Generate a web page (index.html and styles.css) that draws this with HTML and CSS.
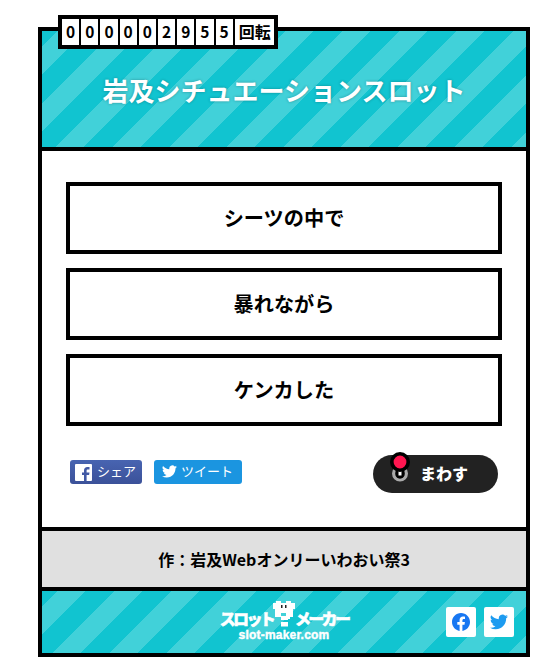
FILE: index.html
```
<!DOCTYPE html>
<html lang="ja">
<head>
<meta charset="utf-8">
<title>岩及シチュエーションスロット</title>
<link rel="stylesheet" href="styles.css">
</head>
<body>
<main class="card">
  <div class="counter"><span>0</span><span>0</span><span>0</span><span>0</span><span>0</span><span>2</span><span>9</span><span>5</span><span>5</span><span class="unit">回転</span></div>
  <header class="head stripes"><h1>岩及シチュエーションスロット</h1></header>
  <section class="body">
    <div class="slot">シーツの中で</div>
    <div class="slot">暴れながら</div>
    <div class="slot">ケンカした</div>
    <div class="actions">
      <a class="share fb"><svg width="17" height="17" viewBox="0 0 17 17"><rect width="17" height="17" rx="1" fill="#fff"/><path d="M9 17v-6H7V8.400h2V6.500C9 4.300 10.300 3 12.400 3H14.500v2.500h-1.700c-.9 0-1.200.4-1.200 1.200v1.700h2.900l-.4 2.600h-2.500v6z" fill="#4259a5"/></svg><span>シェア</span></a>
      <a class="share tw"><svg width="15" height="15" viewBox="0 0 24 24"><path fill="#fff" d="M23.950 4.570a10 10 0 01-2.820.77 4.960 4.960 0 002.160-2.720c-.95.56-2 .96-3.130 1.180a4.920 4.920 0 00-8.380 4.480C7.690 8.090 4.070 6.130 1.640 3.160a4.920 4.920 0 001.520 6.570 4.900 4.900 0 01-2.230-.61v.06a4.920 4.920 0 003.950 4.830 5 5 0 01-2.210.08 4.940 4.940 0 004.600 3.420A9.870 9.870 0 010 19.540a14 14 0 007.550 2.210c9.050 0 14-7.500 14-13.980 0-.21 0-.42-.02-.63a9.940 9.940 0 002.460-2.550z"/></svg><span>ツイート</span></a>
      <button class="spin"><svg width="22" height="32" viewBox="0 0 22 32"><circle cx="11" cy="22.500" r="6.500" fill="#222" stroke="#aaa" stroke-width="3"/><path d="M11 12v11.500" stroke="#000" stroke-width="8" stroke-linecap="round"/><path d="M11 20v4.500" stroke="#fff" stroke-width="3"/><circle cx="11" cy="11" r="8.200" fill="#ff1650" stroke="#000" stroke-width="3.600"/></svg><span>まわす</span></button>
    </div>
  </section>
  <section class="author">作：岩及Webオンリーいわおい祭3</section>
  <footer class="foot stripes">
    <div class="logo">
      <div class="name"><span>スロット</span><svg width="22" height="26" viewBox="0 0 22 26"><path fill="#fff" d="M3 0h5v2h5V0h5v2h4v6h-2v8h-3v2h-2v1H8v-4h5v-3H8v4H2V8H0V2h3zM8 21h7v4.500H8z"/><path fill="#222" d="M8 4h1.500v3H8zM12 4h1.500v3H12z"/></svg><span>メーカー</span></div>
      <div class="url">slot-maker.com</div>
    </div>
    <div class="social">
      <a><svg width="18" height="18" viewBox="0 0 24 24"><path fill="#1877f2" d="M24 12.070C24 5.450 18.630.07 12 .07S0 5.450 0 12.070c0 5.990 4.390 10.960 10.130 11.860v-8.390H7.080v-3.470h3.050V9.430c0-3.010 1.790-4.670 4.530-4.670 1.310 0 2.680.24 2.680.24v2.950h-1.510c-1.490 0-1.960.93-1.960 1.870v2.250h3.330l-.53 3.470h-2.800v8.390C19.610 23.030 24 18.060 24 12.070z"/></svg></a>
      <a><svg width="18" height="18" viewBox="0 0 24 24"><path fill="#1d9bf0" d="M23.950 4.570a10 10 0 01-2.820.77 4.960 4.960 0 002.160-2.720c-.95.56-2 .96-3.130 1.180a4.920 4.920 0 00-8.380 4.480C7.690 8.090 4.070 6.130 1.640 3.160a4.920 4.920 0 001.520 6.570 4.900 4.900 0 01-2.230-.61v.06a4.920 4.920 0 003.950 4.830 5 5 0 01-2.210.08 4.940 4.940 0 004.600 3.420A9.870 9.870 0 010 19.540a14 14 0 007.550 2.210c9.050 0 14-7.500 14-13.980 0-.21 0-.42-.02-.63a9.940 9.940 0 002.460-2.550z"/></svg></a>
    </div>
  </footer>
</main>
</body>
</html>
```

FILE: styles.css
```
* { box-sizing: border-box; }
body {
  margin: 0;
  background: #fff;
  color: #000;
  font-family: "Noto Sans CJK JP", sans-serif;
  font-weight: 700;
}
.card {
  position: relative;
  width: 492px;
  height: 630px;
  margin: 27px 0 0 38px;
  border: 4px solid #000;
  display: flex;
  flex-direction: column;
}
.stripes {
  background: repeating-linear-gradient(135deg, #11c4d0 0 10.700px, #41d1d9 10.700px 30.850px, #11c4d0 30.850px 40.320px);
}
.counter {
  position: absolute;
  left: 16px;
  top: -16px;
  height: 34px;
  width: 220px;
  display: flex;
  gap: 2px;
  padding: 4px;
  background: #000;
  font-size: 16px;
  line-height: 24px;
  text-align: center;
}
.counter span { flex: 0 0 17.200px; background: #fff; font-size: 15.500px; }
.counter .unit { flex: 1; padding-left: 1px; font-size: 16px; }
.head {
  height: 120px;
  border-bottom: 4px solid #000;
  display: flex;
  align-items: center;
  justify-content: center;
}
h1 {
  margin: 2px 0 0;
  font-size: 26px;
  line-height: 40px;
  color: #fff;
  text-shadow: 0 0 3px rgba(0, 0, 0, .3);
  white-space: nowrap;
}
.body {
  height: 376px;
  padding: 31px 24px 0;
}
.slot {
  height: 72px;
  margin-bottom: 14px;
  border: 4px solid #000;
  font-size: 20.200px;
  line-height: 64px;
  text-align: center;
}
.actions {
  display: flex;
  align-items: flex-start;
  padding: 15px 4px 0;
}
.share {
  display: flex;
  align-items: center;
  height: 24px;
  margin: 5px 12px 0 0;
  border-radius: 3px;
  color: #fff;
  font-size: 13px;
  font-weight: 400;
  white-space: nowrap;
}
.share span { line-height: 20px; margin-top: -3px; }
.fb {
  width: 72px;
  padding-left: 5px;
  gap: 5px;
  background: linear-gradient(#4864b1, #3b5199);
}
.fb svg { margin-top: 1px; }
.tw {
  width: 88px;
  padding-left: 8px;
  gap: 4px;
  background: #1b95e0;
}
.tw svg { margin-top: -1px; }
.spin {
  display: flex;
  align-items: flex-start;
  width: 125px;
  height: 38px;
  margin-left: auto;
  padding: 0 0 0 16px;
  gap: 9px;
  border: 0;
  border-radius: 19px;
  background: #222;
  color: #fff;
  font: 900 16px/36px "Noto Sans CJK JP", sans-serif;
}
.spin svg { margin-top: -4px; }
.author {
  height: 64px;
  border: solid #000;
  border-width: 4px 0;
  background: #e0e0e0;
  font-size: 16px;
  line-height: 56px;
  text-align: center;
}
.foot {
  flex: 1;
  display: grid;
  grid-template-columns: 1fr 130px 1fr;
}
.logo {
  grid-column: 2;
  padding-top: 10px;
  color: #fff;
  text-align: center;
}
.name {
  display: flex;
  justify-content: center;
  height: 27px;
  font-size: 16px;
  font-weight: 900;
  line-height: 35px;
  letter-spacing: -2.700px;
  white-space: nowrap;
  -webkit-text-stroke: .5px #fff;
}
.name svg { flex: none; }
.url {
  font: 700 12px/14px "Liberation Sans", sans-serif;
  letter-spacing: .2px;
  -webkit-text-stroke: .4px #fff;
}
.social {
  display: flex;
  gap: 8px;
  justify-content: flex-end;
  padding: 16px 12px 0 0;
}
.social a {
  display: flex;
  align-items: center;
  justify-content: center;
  width: 30px;
  height: 30px;
  border-radius: 2px;
  background: #fff;
}
```
